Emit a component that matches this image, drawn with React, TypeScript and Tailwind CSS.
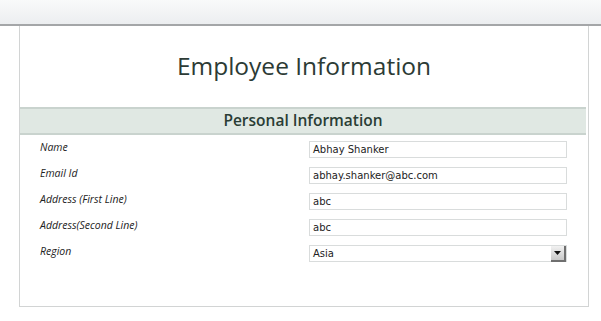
const rows = [
  { label: 'Name', value: 'Abhay Shanker' },
  { label: 'Email Id', value: 'abhay.shanker@abc.com' },
  { label: 'Address (First Line)', value: 'abc' },
  { label: 'Address(Second Line)', value: 'abc' },
];

function Field({ value, select }: { value: string; select?: boolean }) {
  return (
    <div className="flex h-[17px] w-[258px] items-center border border-[#d9dcdc] bg-white pl-[3px] text-[10px] text-[#222] [font-family:'DejaVu_Sans',sans-serif]">
      <span className="flex-1">{value}</span>
      {select && (
        <span className="flex h-[16px] w-[15px] items-center justify-center border-r-2 border-b-2 border-[#6f6f6f] bg-gradient-to-b from-[#f2f2f2] to-[#c8c8c8]">
          <svg width="7" height="4" viewBox="0 0 7 4">
            <path d="M0 0h7L3.5 4z" fill="#111" />
          </svg>
        </span>
      )}
    </div>
  );
}

function Row({ label, children }: { label: string; children: React.ReactNode }) {
  return (
    <div className="flex items-start">
      <span className="w-[289px] pl-[20px] text-[10.5px] leading-[12px] italic text-[#222]">{label}</span>
      {children}
    </div>
  );
}

export default function App() {
  const font = "[font-family:'Open_Sans',sans-serif]";
  return (
    <div className={`h-[321px] w-[601px] bg-white ${font}`}>
      <div className="h-[26px] border-b-2 border-[#a4a6a8] bg-gradient-to-b from-[#f9fafa] to-[#eceef0]" />
      <div className="ml-[19px] h-[281px] w-[570px] border-x border-b border-[#d2d4d4]">
        <div className="flex h-[81px] items-center justify-center text-[24.5px] text-[#2c3b35]">
          Employee Information
        </div>
        <div className="mr-[2px] flex h-[28px] items-center justify-center border-y-2 border-[#c9d3ce] bg-[#e0e8e3] text-[15.5px] font-semibold text-[#2a3d35]">
          Personal Information
        </div>
        <div className="flex flex-col gap-[9px] pt-[6px]">
          {rows.map((r) => (
            <Row key={r.label} label={r.label}>
              <Field value={r.value} />
            </Row>
          ))}
          <Row label="Region">
            <Field value="Asia" select />
          </Row>
        </div>
      </div>
    </div>
  );
}
